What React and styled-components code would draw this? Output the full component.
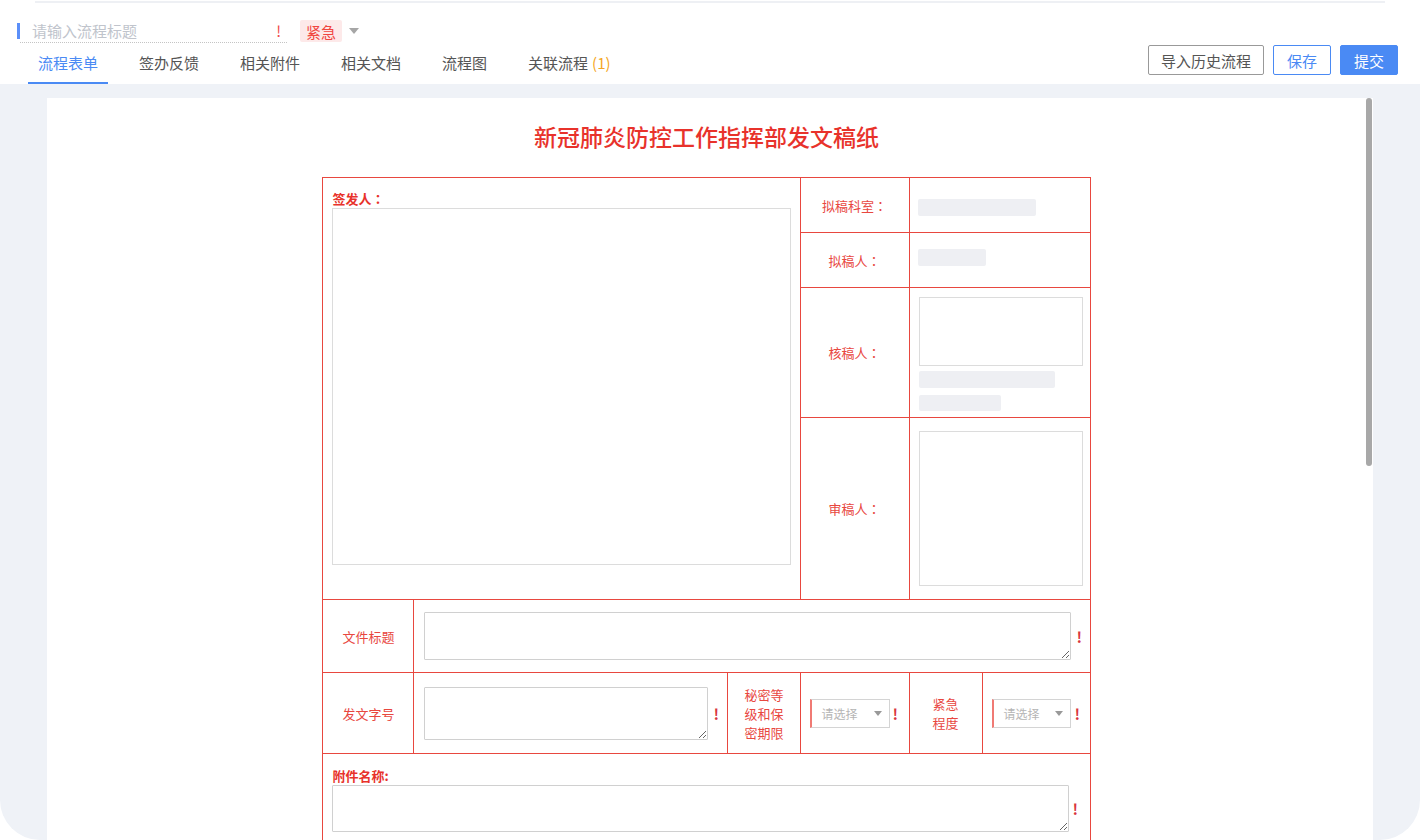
import React from "react";
import styled, { createGlobalStyle } from "styled-components";

const red = "#e8473f";
const blue = "#4a8af4";

const GlobalStyle = createGlobalStyle`
  html, body {
    margin: 0;
    padding: 0;
    background: #fff;
    font-family: "Noto Sans CJK SC", "Noto Sans", sans-serif;
  }
  * { box-sizing: border-box; }
`;

const Shell = styled.div`
  width: 1420px;
  height: 840px;
  background: #eff2f7;
  border-radius: 0 0 40px 40px;
  overflow: hidden;
  display: flex;
  flex-direction: column;
`;

const Header = styled.div`
  background: #fff;
  height: 84px;
  display: flex;
  flex-direction: column;
`;

const TopLine = styled.div`
  height: 2px;
  margin: 1px 35px 0;
  background: #eef0f4;
`;

const TitleRow = styled.div`
  display: flex;
  align-items: center;
  margin: 16px 0 0 17px;
  height: 24px;
`;

const BlueBar = styled.div`
  width: 3px;
  height: 16px;
  background: #5b8ff9;
`;

const TitleInput = styled.div`
  width: 267px;
  height: 24px;
  display: flex;
  align-items: center;
  justify-content: space-between;
  padding: 0 6px 0 12px;
  border-bottom: 1px dotted #c4c4c4;
  font-size: 15px;
  color: #c0c4cc;
`;

const ThinMark = styled.span`
  color: #f04a4a;
  font-size: 15px;
`;

const Tag = styled.div`
  margin-left: 13px;
  height: 22px;
  padding: 0 6px;
  display: flex;
  align-items: center;
  background: #fde9e9;
  color: #f0453f;
  font-size: 15px;
  border-radius: 2px;
`;

const Caret = styled.span`
  margin-left: 7px;
  width: 0;
  height: 0;
  border-left: ${(p) => p.$size || 5}px solid transparent;
  border-right: ${(p) => p.$size || 5}px solid transparent;
  border-top: ${(p) => (p.$size || 5) + 1}px solid ${(p) => p.$color || "#a6a6a6"};
`;

const NavRow = styled.div`
  flex: 1;
  display: flex;
  align-items: flex-end;
  justify-content: space-between;
  padding: 0 22px 0 28px;
`;

const Tabs = styled.div`
  display: flex;
  gap: 21px;
`;

const Tab = styled.div`
  padding: 0 10px 9px;
  font-size: 15px;
  line-height: 20px;
  color: ${(p) => (p.$active ? blue : "#555")};
  border-bottom: 2px solid ${(p) => (p.$active ? blue : "transparent")};
`;

const Count = styled.span`
  color: #f5a623;
  margin-left: 4px;
`;

const Buttons = styled.div`
  display: flex;
  gap: 9px;
  margin-bottom: 9px;
`;

const Button = styled.button`
  height: 30px;
  padding: 0 ${(p) => (p.$wide ? 12 : 13)}px;
  font-family: inherit;
  font-size: 15px;
  border-radius: 2px;
  border: 1px solid ${(p) => (p.$variant === "plain" ? "#999" : blue)};
  background: ${(p) => (p.$variant === "primary" ? blue : "#fff")};
  color: ${(p) =>
    p.$variant === "primary" ? "#fff" : p.$variant === "outline" ? blue : "#555"};
`;

const Content = styled.div`
  flex: 1;
  padding: 14px 47px 0;
  display: flex;
  min-height: 0;
`;

const Card = styled.div`
  flex: 1;
  background: #fff;
  position: relative;
  padding-right: 7px;
  overflow: hidden;
`;

const Scrollbar = styled.div`
  position: absolute;
  top: 0;
  right: 1px;
  width: 6px;
  height: 368px;
  border-radius: 3px;
  background: #a8a8a8;
`;

const FormTitle = styled.h1`
  margin: 22px 0 0;
  text-align: center;
  font-size: 23px;
  font-weight: 500;
  line-height: 32px;
  color: #e8322b;
`;

const Table = styled.table`
  margin: 25px auto 0;
  width: 767px;
  border-collapse: collapse;
  table-layout: fixed;
  font-size: 13px;
  color: ${red};
`;

const Row = styled.tr`
  height: ${(p) => p.$h}px;
`;

const Cell = styled.td`
  border: 1px solid ${red};
  padding: ${(p) => p.$pad || "0"};
  vertical-align: ${(p) => p.$valign || "middle"};
  text-align: ${(p) => p.$align || "left"};
  line-height: ${(p) => p.$lh || "normal"};
`;

const Colon = styled.span`
  font-family: "Noto Sans CJK TC", sans-serif;
`;

const BoldLabel = styled.div`
  font-weight: 700;
  font-size: 13px;
  line-height: 18px;
  color: #e8322b;
`;

const Box = styled.div`
  width: ${(p) => p.$w}px;
  height: ${(p) => p.$h}px;
  border: 1px solid #dcdcdc;
  background: #fff;
`;

const Skeleton = styled.div`
  width: ${(p) => p.$w}px;
  height: ${(p) => p.$h || 17}px;
  margin-top: ${(p) => p.$mt || 0}px;
  background: #eeeff3;
  border-radius: 2px;
`;

const Field = styled.div`
  display: flex;
  align-items: center;
`;

const TextArea = styled.textarea`
  display: block;
  width: ${(p) => p.$w}px;
  height: ${(p) => p.$h}px;
  border: 1px solid #d0d0d0;
  border-radius: 1px;
  resize: both;
  outline: none;
  font-family: inherit;
`;

const Mark = styled.span`
  margin-left: ${(p) => p.$ml || 5}px;
  color: #d9363e;
  font-weight: 700;
  font-size: 15px;
`;

const Select = styled.div`
  width: ${(p) => p.$w}px;
  height: 29px;
  border: 1px solid #d4d4d4;
  border-left: 2px solid #f07a74;
  display: flex;
  align-items: center;
  justify-content: space-between;
  padding: 0 7px 0 10px;
  font-size: 12px;
  color: #b5b5b5;
`;

const RightCell = ({ label, children, pad }) => (
  <>
    <Cell $align="center">
      {label}
      <Colon>：</Colon>
    </Cell>
    <Cell colSpan={2} $valign="top" $pad={pad}>
      {children}
    </Cell>
  </>
);

export default function App() {
  return (
    <>
      <GlobalStyle />
      <Shell>
        <Header>
          <TopLine />
          <TitleRow>
            <BlueBar />
            <TitleInput>
              <span>请输入流程标题</span>
              <ThinMark>!</ThinMark>
            </TitleInput>
            <Tag>紧急</Tag>
            <Caret $size={5} />
          </TitleRow>
          <NavRow>
            <Tabs>
              <Tab $active>流程表单</Tab>
              <Tab>签办反馈</Tab>
              <Tab>相关附件</Tab>
              <Tab>相关文档</Tab>
              <Tab>流程图</Tab>
              <Tab>
                关联流程<Count>(1)</Count>
              </Tab>
            </Tabs>
            <Buttons>
              <Button $variant="plain" $wide>
                导入历史流程
              </Button>
              <Button $variant="outline">保存</Button>
              <Button $variant="primary">提交</Button>
            </Buttons>
          </NavRow>
        </Header>
        <Content>
          <Card>
            <Scrollbar />
            <FormTitle>新冠肺炎防控工作指挥部发文稿纸</FormTitle>
            <Table>
              <colgroup>
                <col style={{ width: 91 }} />
                <col style={{ width: 314 }} />
                <col style={{ width: 72 }} />
                <col style={{ width: 109 }} />
                <col style={{ width: 73 }} />
                <col style={{ width: 108 }} />
              </colgroup>
              <tbody>
                <Row $h={55}>
                  <Cell colSpan={3} rowSpan={4} $valign="top" $pad="12px 9px 0">
                    <BoldLabel>
                      签发人<Colon>：</Colon>
                    </BoldLabel>
                    <Box $w={459} $h={357} />
                  </Cell>
                  <RightCell label="拟稿科室" pad="21px 8px 0">
                    <Skeleton $w={118} />
                  </RightCell>
                </Row>
                <Row $h={55}>
                  <RightCell label="拟稿人" pad="16px 8px 0">
                    <Skeleton $w={68} />
                  </RightCell>
                </Row>
                <Row $h={130}>
                  <RightCell label="核稿人" pad="9px 6px 0 9px">
                    <Box $w={164} $h={69} />
                    <Skeleton $w={136} $mt={5} />
                    <Skeleton $w={82} $h={16} $mt={7} />
                  </RightCell>
                </Row>
                <Row $h={182}>
                  <RightCell label="审稿人" pad="13px 6px 0 9px">
                    <Box $w={164} $h={155} />
                  </RightCell>
                </Row>
                <Row $h={73}>
                  <Cell $align="center">文件标题</Cell>
                  <Cell colSpan={5} $pad="0 0 0 10px">
                    <Field>
                      <TextArea $w={647} $h={48} />
                      <Mark>!</Mark>
                    </Field>
                  </Cell>
                </Row>
                <Row $h={81}>
                  <Cell $align="center">发文字号</Cell>
                  <Cell $pad="0 0 0 10px">
                    <Field>
                      <TextArea $w={284} $h={53} />
                      <Mark>!</Mark>
                    </Field>
                  </Cell>
                  <Cell $align="center" $lh="19px" $pad="0 14px">
                    秘密等级和保密期限
                  </Cell>
                  <Cell $pad="0 0 0 9px">
                    <Field>
                      <Select $w={80}>
                        <span>请选择</span>
                        <Caret $size={4} $color="#999" />
                      </Select>
                      <Mark $ml={3}>!</Mark>
                    </Field>
                  </Cell>
                  <Cell $align="center" $lh="19px" $pad="0 23px">
                    紧急程度
                  </Cell>
                  <Cell $pad="0 0 0 9px">
                    <Field>
                      <Select $w={79}>
                        <span>请选择</span>
                        <Caret $size={4} $color="#999" />
                      </Select>
                      <Mark $ml={4}>!</Mark>
                    </Field>
                  </Cell>
                </Row>
                <Row $h={110}>
                  <Cell colSpan={6} $valign="top" $pad="13px 9px 0">
                    <BoldLabel>附件名称:</BoldLabel>
                    <Field>
                      <TextArea $w={737} $h={47} />
                      <Mark $ml={3}>!</Mark>
                    </Field>
                  </Cell>
                </Row>
              </tbody>
            </Table>
          </Card>
        </Content>
      </Shell>
    </>
  );
}
